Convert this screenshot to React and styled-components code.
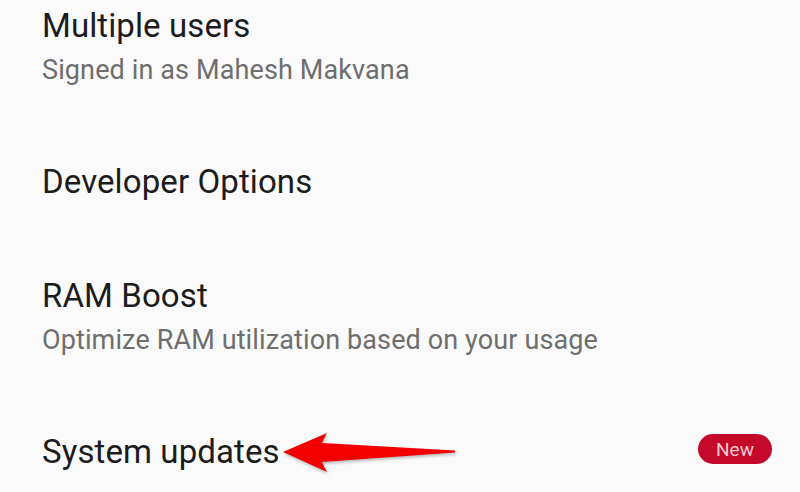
import React from 'react';
import styled, { createGlobalStyle } from 'styled-components';

const GlobalStyle = createGlobalStyle`
    html, body {
        margin: 0;
        padding: 0;
        background: #fafafa;
    }
    body {
        font-family: Roboto, "Noto Sans", "Liberation Sans", sans-serif;
        -webkit-font-smoothing: antialiased;
    }
`;

const Screen = styled.div`
    position: relative;
    width: 800px;
    height: 492px;
    overflow: hidden;
    background: #fafafa;
`;

// list is scrolled a bit, first row is cut at the top
const List = styled.div`
    display: flex;
    flex-direction: column;
    margin-top: -31px;
`;

const Row = styled.div`
    display: flex;
    align-items: center;
    padding: 36px 28px 36px 42px;
`;

const Texts = styled.div`
    flex: 1;
    display: flex;
    flex-direction: column;
`;

const Title = styled.div`
    font-size: 33px;
    line-height: 42px;
    color: #1c1c1c;
    letter-spacing: 0.1px;
`;

const Summary = styled.div`
    margin: 5px 0 1px;
    font-size: 27px;
    line-height: 36px;
    color: #6e6e6e;
    letter-spacing: 0.12px;
`;

const Badge = styled.span`
    display: inline-flex;
    align-items: center;
    justify-content: center;
    width: 74px;
    height: 30px;
    margin-bottom: 6px;
    border-radius: 15px;
    background: #c5092b;
    color: #f7c9d0;
    font-size: 19px;
`;

const Arrow = styled.svg`
    position: absolute;
    left: 280px;
    top: 428px;
    filter: drop-shadow(1px 2px 1.5px rgba(0, 0, 0, 0.25));
`;

const items = [
    { title: 'Multiple users', summary: 'Signed in as Mahesh Makvana' },
    { title: 'Developer Options' },
    { title: 'RAM Boost', summary: 'Optimize RAM utilization based on your usage' },
    { title: 'System updates', badge: 'New' },
];

const SettingRow = ({ title, summary, badge }) => (
    <Row>
        <Texts>
            <Title>{title}</Title>
            {summary && <Summary>{summary}</Summary>}
        </Texts>
        {badge && <Badge>{badge}</Badge>}
    </Row>
);

const App = () => (
    <Screen>
        <GlobalStyle />
        <List>
            {items.map(item => (
                <SettingRow key={item.title} {...item} />
            ))}
        </List>
        <Arrow width="180" height="50" viewBox="0 0 180 50">
            <path
                d="M3 24 L47 5 Q44 10 42 15 L175 22.5 L175 24.5 L42 34 Q44 39 47 44 Z"
                fill="#f20000"
            />
        </Arrow>
    </Screen>
);

export default App;
